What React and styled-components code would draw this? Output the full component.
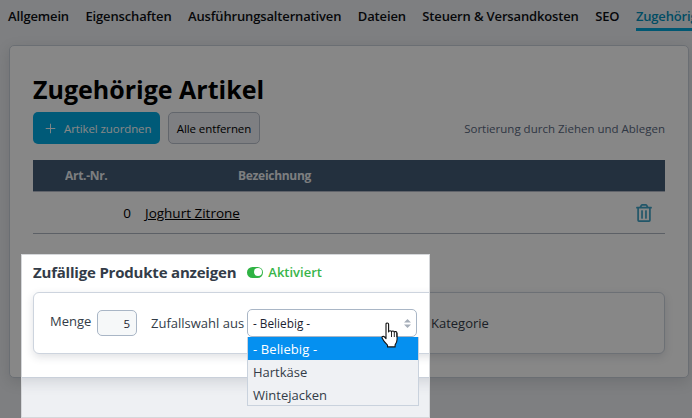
import React from "react";
import styled, { createGlobalStyle } from "styled-components";
import { Plus } from "lucide-react";
import { FaRegTrashAlt } from "react-icons/fa";

const GlobalStyle = createGlobalStyle`
  html, body {
    margin: 0;
    height: 100%;
    overflow: hidden;
    background: #eef0f3;
  }
  #root { height: 100%; }
  * { box-sizing: border-box; }
`;

const tabs = ["Allgemein", "Eigenschaften", "Ausführungsalternativen", "Dateien", "Steuern & Versandkosten", "SEO"];

const Page = styled.div`
  position: relative;
  width: 692px;
  height: 418px;
  overflow: hidden;
  padding: 0 3px 0 9px;
  font-family: "Open Sans", "Noto Sans", sans-serif;
  color: #333c48;
`;

const TabBar = styled.nav`
  display: flex;
  gap: 16.5px;
  height: 45px;
  margin-left: -1px;
  white-space: nowrap;
`;

const Tab = styled.a`
  height: 31px;
  padding-top: 7px;
  font-size: 13px;
  font-weight: 600;
  letter-spacing: -0.15px;
  line-height: 18px;
  color: ${(p) => (p.$active ? "#0090bd" : "#0d0f14")};
  border-bottom: ${(p) => (p.$active ? "3px solid #00a5d8" : "none")};
`;

const Card = styled.section`
  height: 333px;
  padding: 27px 23px 0;
  background: #fff;
  border: 1px solid #c9d0da;
  border-radius: 5px;
  box-shadow: 0 4px 14px rgba(40, 50, 70, 0.15);
`;

const Title = styled.h1`
  margin: 0 0 7px;
  height: 32px;
  font-size: 25px;
  font-weight: 700;
  line-height: 32px;
  color: #000;
`;

const Toolbar = styled.div`
  display: flex;
  align-items: center;
  gap: 8px;
  height: 32px;
  margin-bottom: 16px;
`;

const PrimaryButton = styled.button`
  display: flex;
  align-items: center;
  gap: 6px;
  width: 127px;
  height: 32px;
  padding: 0 0 0 10px;
  font: 11.5px "Open Sans", sans-serif;
  letter-spacing: -0.1px;
  color: #fff;
  background: #00aae2;
  border: none;
  border-radius: 5px;
`;

const SecondaryButton = styled.button`
  width: 92px;
  height: 32px;
  padding: 0;
  font: 11.5px "Open Sans", sans-serif;
  letter-spacing: -0.1px;
  color: #000;
  background: #eef0f5;
  border: 1px solid #b9c0cc;
  border-radius: 5px;
`;

const Hint = styled.span`
  margin-left: auto;
  font-size: 11.5px;
  color: #5a6880;
`;

const TableHead = styled.div`
  display: grid;
  grid-template-columns: 112px 1fr;
  align-items: center;
  height: 32px;
  font-size: 12px;
  font-weight: 700;
  letter-spacing: -0.3px;
  color: #fff;
  background: #425b76;
  border-bottom: 1px solid #b5bcc8;
`;

const HeadCell = styled.span`
  padding-left: ${(p) => p.$pad}px;
  opacity: 0.9;
`;

const TableRow = styled.div`
  display: grid;
  grid-template-columns: 98px 1fr 28px;
  column-gap: 14px;
  align-items: center;
  height: 42px;
  padding-top: 1px;
  font-size: 13.5px;
  color: #000;
  border-bottom: 1px solid #aeb5c0;
`;

const RowNumber = styled.span`
  text-align: right;
`;

const RowLink = styled.a`
  text-decoration: underline;
`;

const DeleteIcon = styled(FaRegTrashAlt)`
  margin-left: -2px;
  color: #3fa3c6;
  font-size: 18px;
`;

const RandomHeader = styled.div`
  display: flex;
  align-items: center;
  gap: 11px;
  height: 22px;
  margin: 27px 0 9px;
`;

const SectionTitle = styled.h2`
  margin: 0;
  font-size: 15px;
  font-weight: 700;
  letter-spacing: -0.2px;
  color: #333c48;
`;

const Toggle = styled.span`
  display: flex;
  align-items: center;
  gap: 5px;
  font-size: 13px;
  font-weight: 600;
  color: #39b54a;
`;

const ToggleTrack = styled.span`
  display: flex;
  justify-content: flex-end;
  align-items: center;
  width: 16px;
  height: 11px;
  padding-right: 1px;
  background: #2fb344;
  border-radius: 6px;

  &::after {
    content: "";
    width: 8px;
    height: 8px;
    background: #fff;
    border-radius: 50%;
  }
`;

const RandomBox = styled.div`
  display: flex;
  align-items: center;
  height: 62px;
  padding: 0 0 0 16px;
  font-size: 13px;
  color: #333c48;
  background: #fff;
  border: 1px solid #cdd4de;
  border-radius: 6px;
  box-shadow: 0 3px 8px rgba(40, 50, 70, 0.15);
`;

const QtyLabel = styled.span`
  width: 47px;
  margin-bottom: 4px;
`;

const QtyInput = styled.span`
  width: 40px;
  height: 26px;
  margin-right: 14px;
  padding-right: 6px;
  font-size: 11.5px;
  line-height: 26px;
  text-align: right;
  color: #1c2330;
  background: #f6f8f9;
  border: 1px solid #a9b6c6;
  border-radius: 5px;
`;

const FromLabel = styled.span`
  width: 96px;
`;

const SelectWrap = styled.div`
  position: relative;
  width: 170px;
  height: 28px;
  margin-right: 14px;
`;

const SelectBox = styled.div`
  display: flex;
  align-items: center;
  justify-content: space-between;
  height: 28px;
  padding: 0 5px;
  font-size: 11.8px;
  color: #1c2330;
  background: #fff;
  border: 1px solid #a9b6c6;
  border-radius: 5px;
`;

const Arrows = styled.svg`
  width: 7px;
  height: 9px;
  fill: #a6aeb9;
`;

const Dropdown = styled.ul`
  position: absolute;
  top: 28px;
  left: 0;
  width: 172px;
  height: 69px;
  margin: 0;
  padding: 0;
  list-style: none;
  background: #eff1f4;
  border: solid #c9d2dd;
  border-width: 0 1px 1px;
  z-index: 2;
`;

const Option = styled.li`
  height: 23px;
  padding: 1px 0 0 5px;
  font-size: 13px;
  letter-spacing: ${(p) => (p.$selected ? "0.1px" : "0")};
  line-height: 23px;
  color: ${(p) => (p.$selected ? "#fff" : "#333c48")};
  background: ${(p) => (p.$selected ? "#0590f0" : "transparent")};
`;

const Spotlight = styled.div`
  position: absolute;
  left: 21px;
  top: 254px;
  width: 409px;
  height: 164px;
  border: 1px solid #d5d7da;
  box-shadow: 0 0 0 800px rgba(0, 0, 0, 0.47);
  pointer-events: none;
`;

const Cursor = styled.svg`
  position: absolute;
  left: 381px;
  top: 322px;
  width: 19px;
  height: 27px;
  z-index: 3;
`;

export default function App() {
  return (
    <Page>
      <GlobalStyle />
      <TabBar>
        {tabs.map((t) => (
          <Tab key={t}>{t}</Tab>
        ))}
        <Tab $active>Zugehörige Artikel</Tab>
      </TabBar>
      <Card>
        <Title>Zugehörige Artikel</Title>
        <Toolbar>
          <PrimaryButton>
            <Plus size={15} strokeWidth={1.5} />
            Artikel zuordnen
          </PrimaryButton>
          <SecondaryButton>Alle entfernen</SecondaryButton>
          <Hint>Sortierung durch Ziehen und Ablegen</Hint>
        </Toolbar>
        <TableHead>
          <HeadCell $pad={32}>Art.-Nr.</HeadCell>
          <HeadCell $pad={93}>Bezeichnung</HeadCell>
        </TableHead>
        <TableRow>
          <RowNumber>0</RowNumber>
          <RowLink>Joghurt Zitrone</RowLink>
          <DeleteIcon />
        </TableRow>
        <RandomHeader>
          <SectionTitle>Zufällige Produkte anzeigen</SectionTitle>
          <Toggle>
            <ToggleTrack />
            Aktiviert
          </Toggle>
        </RandomHeader>
        <RandomBox>
          <QtyLabel>Menge</QtyLabel>
          <QtyInput>5</QtyInput>
          <FromLabel>Zufallswahl aus</FromLabel>
          <SelectWrap>
            <SelectBox>
              - Beliebig -
              <Arrows viewBox="0 0 7 9">
                <path d="M3.5 0L7 3.6H0zM3.5 9L0 5.4H7z" />
              </Arrows>
            </SelectBox>
            <Dropdown>
              <Option $selected>- Beliebig -</Option>
              <Option>Hartkäse</Option>
              <Option>Wintejacken</Option>
            </Dropdown>
          </SelectWrap>
          <span>Kategorie</span>
        </RandomBox>
      </Card>
      <Spotlight />
      <Cursor viewBox="0 0 19 27">
        <path
          d="M5 2.2c0-1.6 2.6-1.6 2.6 0V10c.3-1.6 2.8-1.6 2.9 0 .3-1.4 2.7-1.4 2.8.3.4-1.1 2.5-1 2.6.6l.2 6.1c0 2.6-.8 4.2-2 5.9v2H6.5v-1.8C4.2 21 2.3 18.6 1.2 16.3c-.7-1.5 1-2.6 2.2-1.4L5 16.6z"
          fill="#fff"
          stroke="#111"
          strokeWidth="1.1"
          strokeLinejoin="round"
        />
        <path d="M10.5 10v5M13.3 10.4v4.6M15.9 11v4" stroke="#111" strokeWidth="0.9" fill="none" />
      </Cursor>
    </Page>
  );
}
